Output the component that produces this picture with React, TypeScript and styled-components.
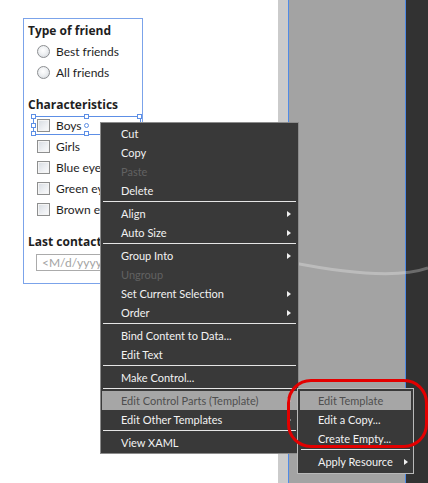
import React from "react";
import styled, { createGlobalStyle } from "styled-components";

const GlobalStyle = createGlobalStyle`
  html, body { margin: 0; padding: 0; }
  body {
    width: 428px;
    height: 483px;
    overflow: hidden;
    font-family: Lato, "Liberation Sans", Arial, sans-serif;
  }
  * { box-sizing: border-box; }
`;

const Stage = styled.div`
  position: relative;
  width: 428px;
  height: 483px;
  display: flex;
  overflow: hidden;
  font-size: 12px;
`;

const Artboard = styled.div`
  width: 278px;
  background: #ffffff;
  padding: 18px 0 0 23px;
`;

const Gutter = styled.div`
  width: 10px;
  background: #cbcbcb;
`;

const Canvas = styled.div`
  width: 118px;
  background: #a3a3a3;
  border-left: 1px solid #4f8ae6;
  border-right: 1px solid #4f8ae6;
`;

const DarkPane = styled.div`
  flex: 1;
  background: #323232;
`;

const FormPanel = styled.div`
  width: 120px;
  height: 266px;
  border: 1px solid #7ba3ea;
  padding: 3px 4px 0 4px;
  display: flex;
  flex-direction: column;
  color: #1e1e1e;
`;

const Heading = styled.div<{ $gap?: number }>`
  height: 18px;
  line-height: 18px;
  font-family: "Open Sans", Lato, sans-serif;
  font-weight: 700;
  font-size: 12px;
  white-space: nowrap;
  margin-top: ${(p) => p.$gap ?? 0}px;
`;

const OptionRow = styled.div<{ $first?: boolean }>`
  position: relative;
  height: 21px;
  display: flex;
  align-items: center;
  gap: 6px;
  padding-left: 9px;
  white-space: nowrap;
  margin-top: ${(p) => (p.$first ? 1 : 0)}px;
`;

const RadioDot = styled.span`
  width: 13px;
  height: 13px;
  border-radius: 50%;
  border: 1px solid #8c8e91;
  background: radial-gradient(circle at 45% 40%, #ffffff 0%, #eef0f2 45%, #cfd3d8 100%);
  flex: none;
`;

const CheckBox = styled.span`
  width: 13px;
  height: 13px;
  border: 1px solid #8e8f8f;
  box-shadow: inset 0 0 0 1px #f4f4f4;
  background: linear-gradient(135deg, #d6dbe1 0%, #eef0f3 60%, #fbfbfc 100%);
  flex: none;
`;

const SelectionFrame = styled.div`
  position: absolute;
  left: 5px;
  top: 1px;
  width: 108px;
  height: 19px;
  border: 1px solid #5d8fe6;
  pointer-events: none;
`;

const Handle = styled.span<{ $x: string; $y: string; $round?: boolean }>`
  position: absolute;
  left: ${(p) => p.$x};
  top: ${(p) => p.$y};
  width: 5px;
  height: 5px;
  margin: -3px 0 0 -3px;
  background: #ffffff;
  border: 1px solid #5d8fe6;
  border-radius: ${(p) => (p.$round ? "50%" : "0")};
`;

const DateBox = styled.div`
  margin-top: 3px;
  margin-left: 8px;
  width: 96px;
  height: 17px;
  border: 1px solid #ababab;
  color: #a3a3a3;
  padding-left: 5px;
  line-height: 15px;
  font-size: 12px;
  white-space: nowrap;
`;

const ContextMenu = styled.div`
  position: absolute;
  left: 100px;
  top: 122px;
  width: 199px;
  background: #393939;
  border: 1px solid #8c8c8c;
  padding: 1px 1px;
  color: #f2f2f2;
  font-size: 11px;
  z-index: 2;
`;

const SubMenu = styled.div`
  position: absolute;
  left: 297px;
  top: 388px;
  width: 117px;
  background: #393939;
  border: 1px solid #b9b9b9;
  padding: 2px;
  color: #f2f2f2;
  font-size: 11px;
  z-index: 3;
`;

const MenuItem = styled.div<{ $disabled?: boolean; $active?: boolean; $sub?: boolean }>`
  height: 19px;
  display: flex;
  align-items: center;
  justify-content: space-between;
  padding: ${(p) => (p.$sub ? "0 3px 0 18px" : "0 6px 0 19px")};
  white-space: nowrap;
  background: ${(p) => (p.$active ? "#a6a6a6" : "transparent")};
  color: ${(p) => (p.$active ? "#4f4f4f" : p.$disabled ? "#626262" : "#f2f2f2")};
`;

const SubArrow = styled.span<{ $dim?: boolean }>`
  width: 0;
  height: 0;
  border-top: 3.5px solid transparent;
  border-bottom: 3.5px solid transparent;
  border-left: 4px solid ${(p) => (p.$dim ? "#6a6a6a" : "#f0f0f0")};
  flex: none;
`;

const Separator = styled.div`
  height: 1px;
  margin: 1px 1px 2px;
  background: #e6e6e6;
`;

const ArcLayer = styled.svg`
  position: absolute;
  left: 289px;
  top: 250px;
  width: 139px;
  height: 40px;
  z-index: 1;
  pointer-events: none;
`;

const CalloutRing = styled.div`
  position: absolute;
  left: 287px;
  top: 379px;
  width: 141px;
  height: 69px;
  border: 3px solid #e30000;
  border-radius: 24px;
  z-index: 4;
  pointer-events: none;
`;

type Entry =
  | { kind: "sep" }
  | { kind: "item"; label: string; disabled?: boolean; active?: boolean; arrow?: boolean };

const mainEntries: Entry[] = [
  { kind: "item", label: "Cut" },
  { kind: "item", label: "Copy" },
  { kind: "item", label: "Paste", disabled: true },
  { kind: "item", label: "Delete" },
  { kind: "sep" },
  { kind: "item", label: "Align", arrow: true },
  { kind: "item", label: "Auto Size", arrow: true },
  { kind: "sep" },
  { kind: "item", label: "Group Into", arrow: true },
  { kind: "item", label: "Ungroup", disabled: true },
  { kind: "item", label: "Set Current Selection", arrow: true },
  { kind: "item", label: "Order", arrow: true },
  { kind: "sep" },
  { kind: "item", label: "Bind Content to Data..." },
  { kind: "item", label: "Edit Text" },
  { kind: "sep" },
  { kind: "item", label: "Make Control..." },
  { kind: "sep" },
  { kind: "item", label: "Edit Control Parts (Template)", active: true, arrow: true },
  { kind: "item", label: "Edit Other Templates", arrow: true },
  { kind: "sep" },
  { kind: "item", label: "View XAML" },
];

const subEntries: Entry[] = [
  { kind: "item", label: "Edit Template", active: true },
  { kind: "item", label: "Edit a Copy..." },
  { kind: "item", label: "Create Empty..." },
  { kind: "sep" },
  { kind: "item", label: "Apply Resource", arrow: true },
];

const renderEntries = (entries: Entry[], sub: boolean) =>
  entries.map((e, i) =>
    e.kind === "sep" ? (
      <Separator key={i} />
    ) : (
      <MenuItem key={i} $disabled={e.disabled} $active={e.active} $sub={sub}>
        <span>{e.label}</span>
        {e.arrow && <SubArrow $dim={e.active && sub} />}
      </MenuItem>
    )
  );

export default function App() {
  return (
    <>
      <GlobalStyle />
      <Stage>
        <Artboard>
          <FormPanel>
            <Heading>Type of friend</Heading>
            <OptionRow $first>
              <RadioDot />
              Best friends
            </OptionRow>
            <OptionRow>
              <RadioDot />
              All friends
            </OptionRow>
            <Heading $gap={13}>Characteristics</Heading>
            <OptionRow $first>
              <CheckBox />
              Boys
              <SelectionFrame>
                <Handle $x="0%" $y="0%" />
                <Handle $x="50%" $y="0%" />
                <Handle $x="100%" $y="0%" />
                <Handle $x="0%" $y="50%" />
                <Handle $x="50%" $y="50%" $round />
                <Handle $x="100%" $y="50%" />
                <Handle $x="0%" $y="100%" />
                <Handle $x="50%" $y="100%" />
                <Handle $x="100%" $y="100%" />
              </SelectionFrame>
            </OptionRow>
            <OptionRow>
              <CheckBox />
              Girls
            </OptionRow>
            <OptionRow>
              <CheckBox />
              Blue eyes
            </OptionRow>
            <OptionRow>
              <CheckBox />
              Green eyes
            </OptionRow>
            <OptionRow>
              <CheckBox />
              Brown eyes
            </OptionRow>
            <Heading $gap={13}>Last contact</Heading>
            <DateBox>&lt;M/d/yyyy&gt;</DateBox>
          </FormPanel>
        </Artboard>
        <Gutter />
        <Canvas />
        <DarkPane />

        <ArcLayer viewBox="0 0 139 40">
          <path d="M 0 12 Q 100 32 139 18" fill="none" stroke="rgba(255,255,255,0.28)" strokeWidth="3" />
        </ArcLayer>

        <ContextMenu>{renderEntries(mainEntries, false)}</ContextMenu>
        <SubMenu>{renderEntries(subEntries, true)}</SubMenu>
        <CalloutRing />
      </Stage>
    </>
  );
}
